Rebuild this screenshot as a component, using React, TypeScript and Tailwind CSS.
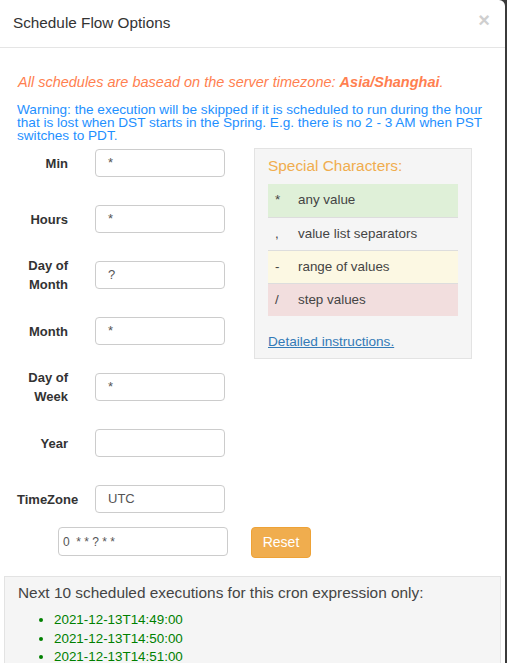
const fields: { label: string; value: string }[] = [
  { label: "Min", value: "*" },
  { label: "Hours", value: "*" },
  { label: "Day of Month", value: "?" },
  { label: "Month", value: "*" },
  { label: "Day of Week", value: "*" },
  { label: "Year", value: "" },
  { label: "TimeZone", value: "UTC" },
];

const specials: { sym: string; text: string; bg: string }[] = [
  { sym: "*", text: "any value", bg: "bg-[#dff0d8]" },
  { sym: ",", text: "value list separators", bg: "bg-transparent" },
  { sym: "-", text: "range of values", bg: "bg-[#fcf8e3]" },
  { sym: "/", text: "step values", bg: "bg-[#f2dede]" },
];

const nextRuns = ["2021-12-13T14:49:00", "2021-12-13T14:50:00", "2021-12-13T14:51:00"];

function FieldRow({ label, value }: { label: string; value: string }) {
  return (
    <div className="flex h-[28px] items-center">
      <div className="w-[51px] shrink-0 text-right text-[13px] font-bold leading-[19px] text-[#333]">{label}</div>
      <div className="ml-[27px] flex h-[28px] w-[130px] shrink-0 items-center rounded-[4px] border border-[#ccc] bg-white px-[12px] text-[13px] text-[#555]">
        {value}
      </div>
    </div>
  );
}

export default function App() {
  return (
    <div className="h-[663px] w-[507px] overflow-hidden bg-[#3b3b3b] font-['Liberation_Sans',Arial,sans-serif]">
      <div className="h-full w-[505px] rounded-tr-[6px] bg-white">
        <header className="flex h-[48px] items-center justify-between border-b border-[#e5e5e5] pl-[13px] pr-[15px]">
          <h4 className="text-[15.3px] text-[#333]">Schedule Flow Options</h4>
          <span className="-mt-[8px] text-[20px] font-bold leading-none text-[#cfcfcf]">×</span>
        </header>

        <div className="px-[17px] pt-[24px]">
          <p className="pl-[1px] text-[14.5px] italic leading-[20px] text-[#ff7f50]">
            All schedules are basead on the server timezone: <b>Asia/Shanghai</b>.
          </p>
          <p className="mt-[11px] w-[470px] text-[13.6px] leading-[13px] text-[#1e90ff]">
            Warning: the execution will be skipped if it is scheduled to run during the hour that is lost when DST
            starts in the Spring. E.g. there is no 2 - 3 AM when PST switches to PDT.
          </p>

          <div className="mt-[7px] flex">
            <div className="flex flex-col gap-[28px]">
              {fields.map((f) => (
                <FieldRow key={f.label} label={f.label} value={f.value} />
              ))}
            </div>

            <div className="-mt-[1px] ml-[29px] h-[211px] w-[218px] border border-[#e3e3e3] bg-[#f5f5f5] px-[13px] pt-[7px]">
              <div className="text-[15.4px] leading-[20px] text-[#f0ad4e]">Special Characters:</div>
              <div className="mt-[8px]">
                {specials.map((s, i) => (
                  <div
                    key={s.text}
                    className={`flex h-[33px] items-center text-[13.4px] text-[#444] ${s.bg} ${i > 0 ? "border-t border-[#ddd]" : ""}`}
                  >
                    <span className="w-[30px] pl-[7px]">{s.sym}</span>
                    <span>{s.text}</span>
                  </div>
                ))}
              </div>
              <a className="mt-[17px] block text-[13.6px] leading-[18px] text-[#337ab7] underline">Detailed instructions.</a>
            </div>
          </div>

          <div className="mt-[14px] flex items-start">
            <div className="ml-[41px] flex h-[29px] w-[170px] items-center rounded-[4px] border border-[#ccc] bg-white pl-[4px] text-[12px] text-[#555]">
              0&nbsp;&nbsp;* * ? * *
            </div>
            <button className="ml-[23px] h-[31px] w-[60px] rounded-[4px] border border-[#eea236] bg-[#f0ad4e] text-[14px] text-white">
              Reset
            </button>
          </div>
        </div>

        <div className="mx-[4px] mt-[18px] h-[200px] border border-[#e3e3e3] bg-[#f5f5f5] px-[13px] pt-[6px]">
          <p className="text-[15.4px] leading-[20px] text-[#444]">Next 10 scheduled executions for this cron expression only:</p>
          <ul className="mt-[8px] list-disc pl-[36px] text-[13.4px] leading-[18.5px] text-[#008000]">
            {nextRuns.map((r) => (
              <li key={r}>{r}</li>
            ))}
          </ul>
        </div>
      </div>
    </div>
  );
}
